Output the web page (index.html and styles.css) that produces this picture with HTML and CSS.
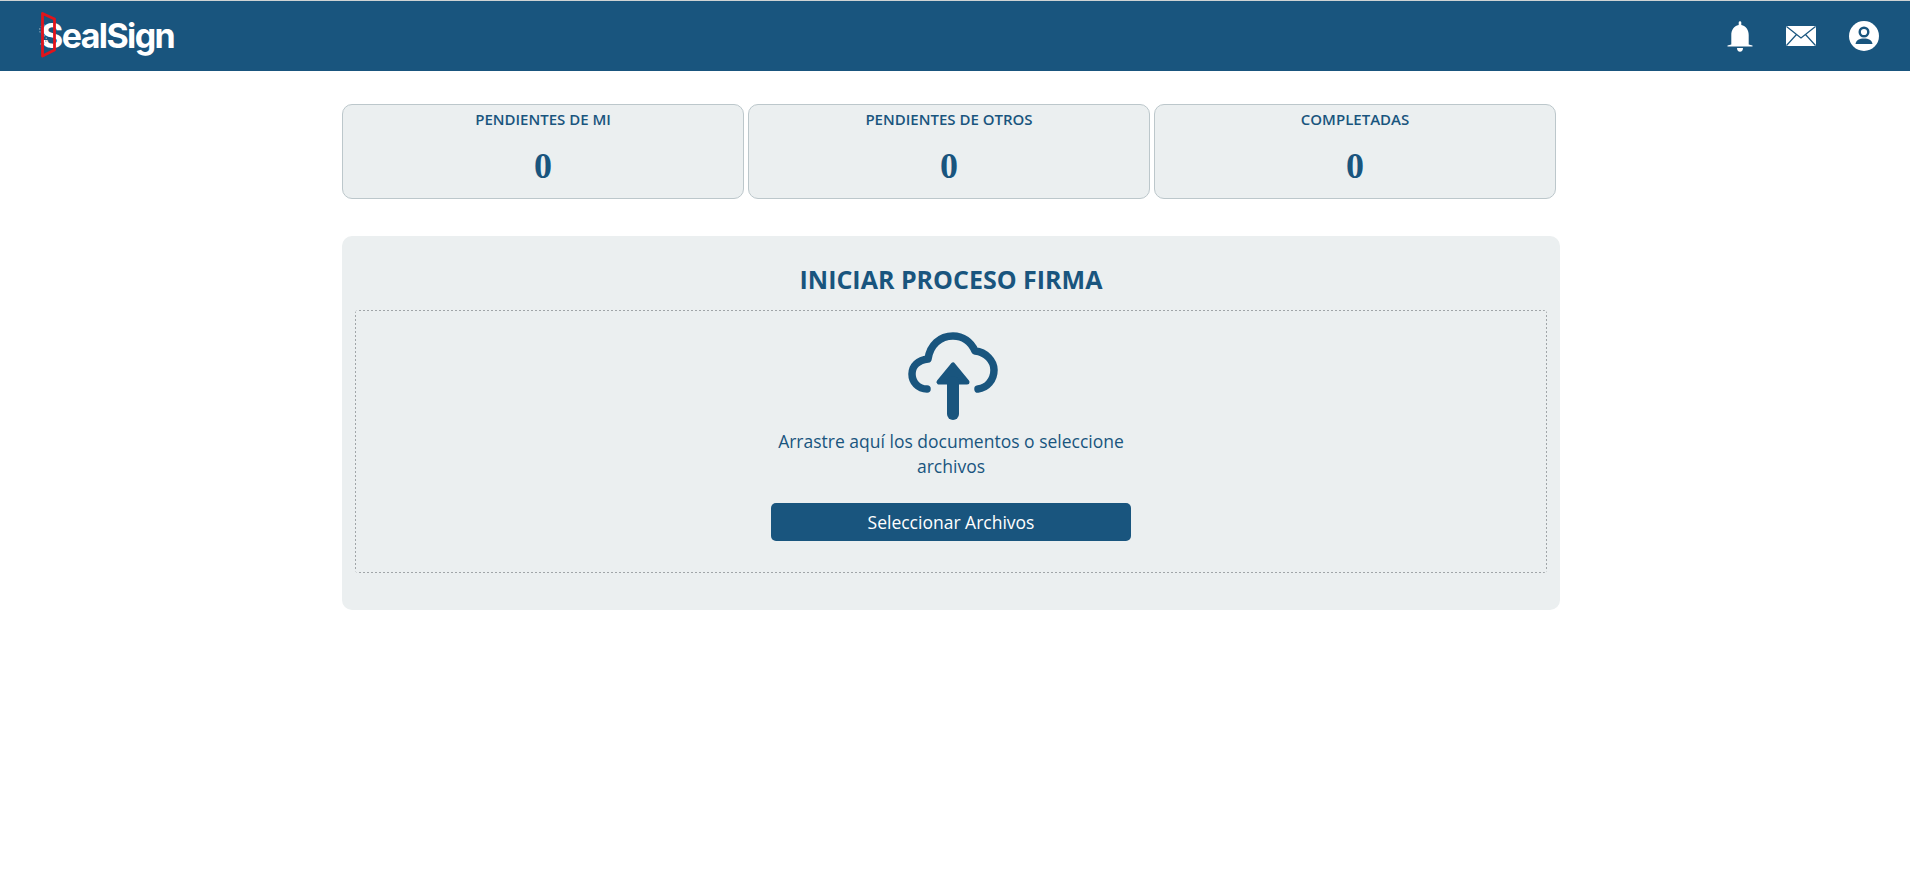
FILE: index.html
```html
<!DOCTYPE html>
<html lang="es">
<head>
<meta charset="utf-8">
<title>SealSign</title>
<link rel="stylesheet" href="styles.css">
</head>
<body>
<header class="topbar">
  <a class="logo">
    <svg class="logo-mark" viewBox="0 0 16 46" width="16" height="46" aria-hidden="true"><path d="M4 13C-3 14-3 21 3 23.500 7 25.500 6 32-1 32" fill="none" stroke="#8aa3b5" stroke-width="1.200" stroke-dasharray="1.500 1.500"/><path d="M1.500 1.500 L13.500 7 V38 L1.500 44 Z" fill="none" stroke="#e1141c" stroke-width="2.800" stroke-linejoin="round"/></svg>
    <span class="logo-text">SealSign</span>
  </a>
  <nav class="top-icons">
    <svg class="ti-bell" viewBox="0 0 26 31" width="26" height="31" aria-hidden="true"><path fill="#fff" d="M11.700 1.500a1.300 1.300 0 0 1 2.600 0V4c4.800.8 7.400 5.200 7.400 10v9.500L25.500 24.600v.9H.5v-.9L4.300 23.500V14c0-4.800 2.600-9.200 7.400-10z"/><path fill="#fff" d="M10 27h6c0 2.200-1.200 3.800-3 3.800S10 29.200 10 27z"/></svg>
    <svg class="ti-mail" viewBox="0 0 30 20" width="30" height="20" aria-hidden="true"><rect width="30" height="20" rx="1.200" fill="#fff"/><path d="M.5.5 15 12 29.500.5M.5 19.500 10.500 8.500M29.500 19.500 19.500 8.500" fill="none" stroke="#19557e" stroke-width="1.200"/></svg>
    <svg class="ti-user" viewBox="0 0 30 30" width="30" height="30" aria-hidden="true"><circle cx="15" cy="15" r="15" fill="#fff"/><circle cx="15" cy="11" r="4.300" fill="none" stroke="#19557e" stroke-width="2.400"/><path d="M6.500 23c.500-3.800 4-5.500 8.500-5.500s8 1.700 8.500 5.500z" fill="#19557e"/></svg>
  </nav>
</header>

<main class="content">
  <section class="stats">
    <div class="stat"><h3 class="stat-label">PENDIENTES DE MI</h3><div class="stat-value">0</div></div>
    <div class="stat"><h3 class="stat-label">PENDIENTES DE OTROS</h3><div class="stat-value">0</div></div>
    <div class="stat"><h3 class="stat-label">COMPLETADAS</h3><div class="stat-value">0</div></div>
  </section>

  <section class="panel">
    <h2 class="panel-title">INICIAR PROCESO FIRMA</h2>
    <div class="dropzone">
      <svg class="cloud" viewBox="0 0 90 88" width="90" height="88" aria-hidden="true">
        <path d="M19 57C10 57 4 50 4 42 4 34 10 28 20 27 22 13 32 4 45 4 55 4 63 10 67 19 78 20 86 29 86 38 86 48 79 56 70 57" fill="none" stroke="#19557e" stroke-width="7.500" stroke-linecap="round" stroke-linejoin="round"/>
        <path d="M45 33 31 50H59Z" fill="#19557e" stroke="#19557e" stroke-width="5" stroke-linejoin="round"/>
        <path d="M45 50V82" fill="none" stroke="#19557e" stroke-width="12" stroke-linecap="round"/>
      </svg>
      <p class="drop-text">Arrastre aquí los documentos o seleccione archivos</p>
      <button class="select-btn" type="button">Seleccionar Archivos</button>
    </div>
  </section>
</main>
</body>
</html>
```
FILE: styles.css
```css
* { box-sizing: border-box; }
html, body { margin: 0; padding: 0; background: #fff; }
body { font-family: "Open Sans", "Liberation Sans", sans-serif; color: #19557e; overflow: hidden; }

.topbar {
  height: 71px;
  border-top: 1px solid #cfd3d3;
  background: #19557e;
  display: flex;
  align-items: center;
  justify-content: space-between;
  padding: 0 31px 0 41px;
}
.logo { position: relative; display: block; height: 40px; width: 136px; }
.logo-mark { position: absolute; left: 0; top: -4px; z-index: 1; overflow: visible; }
.logo-text {
  font-family: Inter, "Liberation Sans", sans-serif;
  font-weight: 700;
  font-size: 34px;
  line-height: 40px;
  letter-spacing: -1.600px;
  color: #fff;
}
.top-icons { display: flex; align-items: center; gap: 33px; }
.ti-bell, .ti-mail, .ti-user { display: block; }

.content { width: 1218px; margin: 33px 0 0 342px; }

.stats { display: flex; gap: 4px; }
.stat {
  width: 402px;
  height: 95px;
  background: #ebeff0;
  border: 1px solid #bcc7cb;
  border-radius: 10px;
  text-align: center;
}
.stat-label {
  margin: 4px 0 0;
  font-size: 15px;
  line-height: 20px;
  font-weight: 600;
}
.stat-value {
  margin-top: 17px;
  font-family: "Liberation Serif", serif;
  font-weight: 700;
  font-size: 36px;
  line-height: 41px;
}

.panel {
  margin-top: 37px;
  height: 374px;
  background: #ebeff0;
  border-radius: 10px;
  padding: 26px 13px 0;
}
.panel-title {
  margin: 0;
  text-align: center;
  font-size: 25px;
  line-height: 34px;
  font-weight: 700;
}
.dropzone {
  margin-top: 14px;
  height: 263px;
  border-radius: 4px;
  background:
    repeating-linear-gradient(90deg, #a0a5a8 0 2px, transparent 2px 4px) left top / 100% 1px no-repeat,
    repeating-linear-gradient(90deg, #a0a5a8 0 2px, transparent 2px 4px) left bottom / 100% 1px no-repeat,
    repeating-linear-gradient(0deg, #a0a5a8 0 2px, transparent 2px 4px) left top / 1px 100% no-repeat,
    repeating-linear-gradient(0deg, #a0a5a8 0 2px, transparent 2px 4px) right top / 1px 100% no-repeat;
  display: flex;
  flex-direction: column;
  align-items: center;
  padding-top: 22px;
}
.cloud { display: block; margin-left: 4px; }
.drop-text {
  margin: 9px 0 0;
  width: 360px;
  text-align: center;
  font-size: 17.500px;
  line-height: 25px;
}
.select-btn {
  margin-top: 24px;
  width: 360px;
  height: 38px;
  background: #19557e;
  border: 0;
  border-radius: 5px;
  color: #fff;
  font-family: inherit;
  font-size: 17.500px;
  line-height: 24px;
  padding: 0;
}
```
